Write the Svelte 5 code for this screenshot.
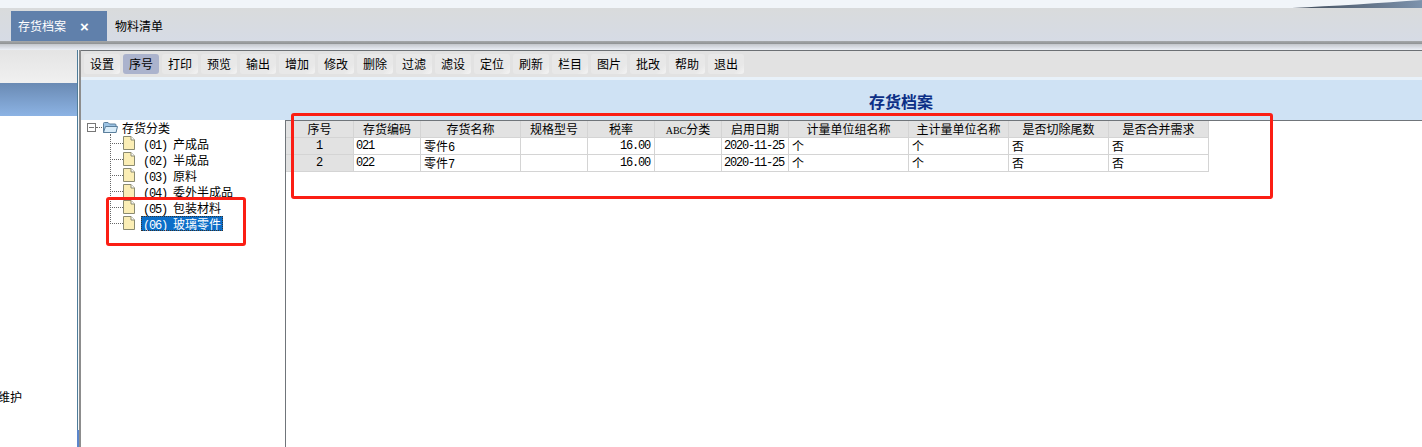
<script>
	const tools = ['设置', '序号', '打印', '预览', '输出', '增加', '修改', '删除', '过滤', '滤设', '定位', '刷新', '栏目', '图片', '批改', '帮助', '退出'];
	const nodes = ['产成品', '半成品', '原料', '委外半成品', '包装材料', '玻璃零件'];
	const columns = [
		{ title: '序号', width: 68 },
		{ title: '存货编码', width: 67 },
		{ title: '存货名称', width: 100 },
		{ title: '规格型号', width: 67 },
		{ title: '税率', width: 67 },
		{ title: 'ABC分类', width: 67 },
		{ title: '启用日期', width: 67 },
		{ title: '计量单位组名称', width: 120 },
		{ title: '主计量单位名称', width: 100 },
		{ title: '是否切除尾数', width: 100 },
		{ title: '是否合并需求', width: 100 }
	];
	const rows = [
		['1', '021', '零件6', '', '16.00', '', '2020-11-25', '个', '个', '否', '否'],
		['2', '022', '零件7', '', '16.00', '', '2020-11-25', '个', '个', '否', '否']
	];
</script>

<div class="page">
	<div class="top">
		<svg class="swoosh" width="130" height="8" viewBox="0 0 130 8">
			<defs>
				<linearGradient id="sw" x1="0" x2="1" y1="0" y2="0">
					<stop offset="0" stop-color="#3f4a58" />
					<stop offset="1" stop-color="#7d93ad" />
				</linearGradient>
			</defs>
			<path d="M0 8 C40 6 90 3 130 0 L130 8 Z" fill="url(#sw)" />
		</svg>
	</div>
	<div class="tabbar">
		<div class="tab active"><span>存货档案</span><b>×</b></div>
		<div class="tab">物料清单</div>
	</div>
	<div class="tabline"></div>

	<div class="main">
		<aside class="side">
			<div class="side-head"></div>
			<div class="side-blue"></div>
			<div class="side-text">维护</div>
		</aside>
		<div class="splitter"></div>

		<section class="work">
			<div class="toolbar">
				{#each tools as t, i}
					<div class="tool" class:on={i === 1}>{t}</div>
				{/each}
			</div>
			<div class="title">存货档案</div>
			<div class="body">
				<div class="tree">
					<div class="root">
						<span class="box"></span>
						<span class="dash"></span>
						<svg width="16" height="13" viewBox="0 0 16 13">
							<path d="M1.5 11.5V2.5Q1.5 1.5 2.5 1.5H6L7.5 3H13Q14 3 14 4V11.5Z" fill="#9cc3e4" stroke="#5b7f9c" />
							<path d="M1.5 11.5L3.5 5.5H15.5L14 11.5Z" fill="#d9ecf9" stroke="#5b7f9c" />
						</svg>
						<span class="label">存货分类</span>
					</div>
					<div class="children">
						{#each nodes as n, i}
							<div class="node">
								<span class="hline"></span>
								<svg width="12" height="14" viewBox="0 0 12 14">
									<path d="M.5.5H8L11.5 4V13.5H.5Z" fill="#fbeeb5" stroke="#8a8a70" />
									<path d="M8 .5V4H11.5" fill="#fff" stroke="#8a8a70" />
								</svg>
								<span class="label" class:selected={i === 5}><i>(0{i + 1})</i>{n}</span>
							</div>
						{/each}
					</div>
				</div>

				<div class="grid">
					<div class="row head">
						{#each columns as c}
							<div class="cell" style="width: {c.width}px">{#if c.title === 'ABC分类'}<i class="abc">ABC</i>分类{:else}{c.title}{/if}</div>
						{/each}
					</div>
					{#each rows as r}
						<div class="row">
							{#each r as v, i}
								<div class="cell" class:idx={i === 0} class:right={i === 4} class:num={/^[\d.-]+$/.test(v)} style="width: {columns[i].width}px">
									{#if i === 2}{v.slice(0, 2)}<i>{v.slice(2)}</i>{:else}{v}{/if}
								</div>
							{/each}
						</div>
					{/each}
				</div>
			</div>
		</section>
	</div>

	<div class="mark mark-grid"></div>
	<div class="mark mark-tree"></div>
</div>

<style>
	:global(body) {
		margin: 0;
		background: #fff;
	}

	.page {
		position: relative;
		width: 1422px;
		height: 447px;
		overflow: hidden;
		font-family: "Noto Sans CJK SC", sans-serif;
		font-size: 12px;
		color: #000;
	}

	.top {
		position: relative;
		height: 8px;
		background: #f1f5f9;
	}

	.swoosh {
		position: absolute;
		right: 0;
		top: 0;
	}

	.tabbar {
		display: flex;
		height: 33px;
		padding-top: 3px;
		box-sizing: border-box;
		padding-left: 11px;
		background: linear-gradient(#d9dbdc, #d6dbe5);
	}

	.tab {
		width: 96px;
		display: flex;
		align-items: center;
		padding-left: 8px;
		box-sizing: border-box;
		line-height: 30px;
	}

	.tab.active {
		padding-left: 7px;
		background: #6080ab;
		color: #fff;
		gap: 14px;
	}

	.tab b {
		font: bold 15px "Liberation Sans", sans-serif;
	}

	.tabline {
		height: 9px;
		background: linear-gradient(#a5a8aa 0, #8f9294 33%, #c4c7cc 34%, #e4e8f0 88%, #eef1f5);
	}

	.main {
		display: flex;
		height: 397px;
	}

	.side {
		width: 77px;
		display: flex;
		flex-direction: column;
		overflow: hidden;
	}

	.side-head {
		height: 33px;
		background: linear-gradient(#e4e4e4, #f0f0f0);
	}

	.side-blue {
		height: 33px;
		background: linear-gradient(#6a8ab3, #8cb3e4);
	}

	.side-text {
		margin: 273px 0 0 -2px;
		line-height: 16px;
	}

	.splitter {
		width: 4px;
		background:
			linear-gradient(90deg, #5b86cc 50%, transparent 50%) bottom / 100% 17px no-repeat,
			linear-gradient(90deg, #4f7d9a 25%, #f4f8fb 25%, #f4f8fb 50%, #8d8d8d 50%);
	}

	.work {
		flex: 1;
		display: flex;
		flex-direction: column;
	}

	.toolbar {
		display: flex;
		gap: 3px;
		height: 30px;
		box-sizing: border-box;
		padding: 3px 0 0 3px;
		background: #e2e2e2;
		border-top: 1px solid #6c7074;
		border-bottom: 3px solid #e8f1f9;
	}

	.tool {
		width: 36px;
		height: 20px;
		line-height: 20px;
		text-align: center;
		border-radius: 3px;
		background: linear-gradient(135deg, #e8e8e8 80%, #f4f4f4);
	}

	.tool.on {
		background: #abb3cd;
	}

	.title {
		height: 40px;
		line-height: 42px;
		padding-left: 788px;
		box-sizing: border-box;
		background: #cfe2f4;
		font-size: 16px;
		font-weight: bold;
		color: #0c2f86;
	}

	.body {
		flex: 1;
		display: flex;
	}

	.tree {
		width: 205px;
		box-sizing: border-box;
		padding: 0 0 0 6px;
		border-right: 1px solid #70757a;
	}

	.root {
		display: flex;
		align-items: center;
		height: 16px;
		margin-top: -1px;
	}

	.box {
		width: 7px;
		height: 7px;
		border: 1px solid #777;
		background: linear-gradient(#777, #777) center / 5px 1px no-repeat;
	}

	.dash {
		width: 6px;
		border-top: 1px dotted #666;
	}

	.root .label {
		margin-left: 4px;
	}

	.children {
		position: relative;
		margin-left: 23px;
	}

	.children::before {
		content: '';
		position: absolute;
		left: 0;
		top: -1px;
		height: 90px;
		border-left: 1px dotted #666;
	}

	.node {
		display: flex;
		align-items: center;
		height: 16px;
	}

	.hline {
		width: 13px;
		border-top: 1px dotted #666;
	}

	.node .label {
		margin-left: 6px;
		width: 82px;
		height: 15px;
		line-height: 15px;
		white-space: nowrap;
	}

	.label i {
		font: 12px "Liberation Mono", monospace;
		letter-spacing: -1.2px;
		margin: 0 6px 0 2px;
	}

	.cell i {
		font: 12px "Liberation Mono", monospace;
		letter-spacing: -1.2px;
	}

	.node .label.selected {
		background: #0b6ec8;
		color: #fff;
		outline: 1px dotted #333;
		outline-offset: -1px;
	}

	.grid {
		flex: 1;
		border-top: 1px solid #70757a;
	}

	.row {
		display: flex;
		height: 17px;
	}

	.row.head {
		width: fit-content;
		background: #e2e2e2;
	}

	.cell {
		box-sizing: border-box;
		height: 17px;
		line-height: 16px;
		padding: 0 3px;
		border-right: 1px solid #d4d4d4;
		border-bottom: 1px solid #d4d4d4;
		white-space: nowrap;
		overflow: hidden;
	}

	.row.head .cell {
		text-align: center;
	}

	.cell.idx {
		background: #e2e2e2;
		text-align: center;
	}

	.cell.right {
		text-align: right;
		padding-right: 4px;
	}

	.cell.num {
		font: 12px/16px "Liberation Mono", monospace;
		letter-spacing: -1.2px;
		padding-left: 2px;
	}

	.cell i.abc {
		font: 10px "Liberation Serif", serif;
		letter-spacing: 0;
	}

	.mark {
		position: absolute;
		box-sizing: border-box;
		border: 3px solid #fb1e14;
		border-radius: 3px;
	}

	.mark-grid {
		left: 291px;
		top: 113px;
		width: 982px;
		height: 86px;
	}

	.mark-tree {
		left: 106px;
		top: 197px;
		width: 140px;
		height: 49px;
	}
</style>
